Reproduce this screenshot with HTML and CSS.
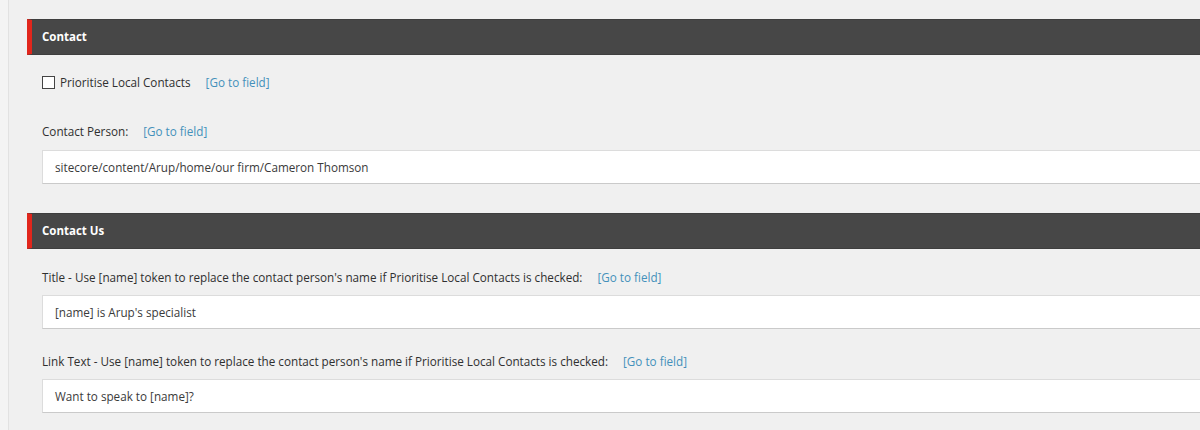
FILE: index.html
```html
<!DOCTYPE html>
<html>
<head>
<meta charset="utf-8">
<link rel="stylesheet" href="styles.css">
</head>
<body>
<div class="page">
  <div class="rail"></div>
  <div class="main">
    <div class="section">
      <div class="section-head">Contact</div>
      <div class="section-body first">
        <div class="field check-field">
          <label class="check-label"><span class="checkbox"></span>Prioritise Local Contacts</label>
          <a class="goto" href="#">[Go to field]</a>
        </div>
        <div class="field">
          <div class="label wide">Contact Person:<a class="goto" href="#">[Go to field]</a></div>
          <div class="input">sitecore/content/Arup/home/our firm/Cameron Thomson</div>
        </div>
      </div>
    </div>
    <div class="section">
      <div class="section-head">Contact Us</div>
      <div class="section-body">
        <div class="field">
          <div class="label">Title - Use [name] token to replace the contact person's name if Prioritise Local Contacts is checked:<a class="goto" href="#">[Go to field]</a></div>
          <div class="input">[name] is Arup's specialist</div>
        </div>
        <div class="field">
          <div class="label">Link Text - Use [name] token to replace the contact person's name if Prioritise Local Contacts is checked:<a class="goto" href="#">[Go to field]</a></div>
          <div class="input">Want to speak to [name]?</div>
        </div>
      </div>
    </div>
  </div>
</div>
</body>
</html>
```

FILE: styles.css
```css
html, body {
  margin: 0;
  padding: 0;
  background: #f0f0f0;
  overflow: hidden;
}
body {
  font-family: "Open Sans", "Noto Sans", sans-serif;
  font-size: 11.7px;
  color: #2f2f2f;
}
.page {
  display: flex;
  height: 430px;
}
.rail {
  width: 8px;
  flex: none;
  background: #f4f4f4;
  border-right: 1px solid #e2e2e2;
}
.main {
  flex: 1;
  padding-left: 18px;
  padding-top: 19px;
  min-width: 0;
}
.section-head {
  height: 34px;
  line-height: 34px;
  background: #474747;
  border-top: 1px solid #3e3e3e;
  border-bottom: 1px solid #3e3e3e;
  border-left: 5px solid #e1261c;
  padding-left: 10px;
  color: #fff;
  font-weight: 700;
  font-size: 11.5px;
}
.section-body {
  padding: 20px 0 29px 15px;
}
.section-body.first {
  padding-top: 19px;
}
.field {
  margin-bottom: 24px;
}
.field:last-child {
  margin-bottom: 0;
}
.check-field {
  display: flex;
  align-items: center;
  height: 16px;
  margin-bottom: 33px;
}
.check-label {
  display: flex;
  align-items: center;
}
.checkbox {
  width: 11px;
  height: 11px;
  border: 1px solid #444;
  background: #fff;
  margin-right: 5px;
}
.label {
  line-height: 16px;
  margin-bottom: 10px;
}
.label.wide {
  margin-bottom: 11px;
}
.goto {
  color: #4490bb;
  text-decoration: none;
  margin-left: 15px;
}
.input {
  height: 32px;
  line-height: 32px;
  background: #fff;
  border: 1px solid #dcdcdc;
  border-bottom-color: #cacaca;
  border-right: none;
  padding-left: 12px;
  margin-right: -20px;
  color: #3a3a3a;
}
```
